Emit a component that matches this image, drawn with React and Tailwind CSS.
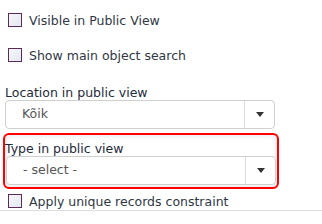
import React from "react";

function Box() {
  return (
    <span className="block w-[14px] h-[14px] shrink-0 border border-[#5b2a57] bg-gradient-to-br from-[#f4f6f9] to-[#e3e9f1]" />
  );
}

function Check({ label, className = "" }) {
  return (
    <div className={"flex items-center h-[14px] pl-[8px] gap-[7px] " + className}>
      <Box />
      <span className="leading-[15px] text-[#2f3744]">{label}</span>
    </div>
  );
}

function Select({ value, className = "" }) {
  return (
    <div className={"flex h-[29px] w-[270px] border border-[#cfcfcf] rounded-[4px] bg-white " + className}>
      <div className="flex-1 flex items-center pl-[16px] text-[#555]">{value}</div>
      <div className="w-[30px] border-l border-[#dcdcdc] flex items-center justify-center">
        <svg width="8" height="5" viewBox="0 0 8 5"><path d="M0 0h8L4 5z" fill="#333" /></svg>
      </div>
    </div>
  );
}

export default function App() {
  return (
    <div
      className="w-[322px] h-[224px] bg-white overflow-hidden text-[12.5px] pt-[13px]"
      style={{ fontFamily: '"DejaVu Sans", Verdana, sans-serif' }}
    >
      <Check label="Visible in Public View" />
      <Check label="Show main object search" className="mt-[21px]" />
      <div className="mt-[23px] pl-[5px] leading-[15px] text-[#1e2a3a]">Location in public view</div>
      <Select value="Kõik" className="ml-[5px]" />
      <div className="ml-[3px] mt-[4px] w-[276px] h-[56px] border-2 border-[#ff0000] rounded-[6px] shadow-[inset_0_0_6px_rgba(0,0,0,0.12)] pl-[1px] pt-[6px]">
        <div className="leading-[15px] text-[#1e2a3a] -ml-[1px]">Type in public view</div>
        <Select value="- select -" className="mt-[0px]" />
      </div>
      <Check label="Apply unique records constraint" className="mt-[5px]" />
      <div className="mt-[2px] h-px bg-[#dddddd]" />
    </div>
  );
}
